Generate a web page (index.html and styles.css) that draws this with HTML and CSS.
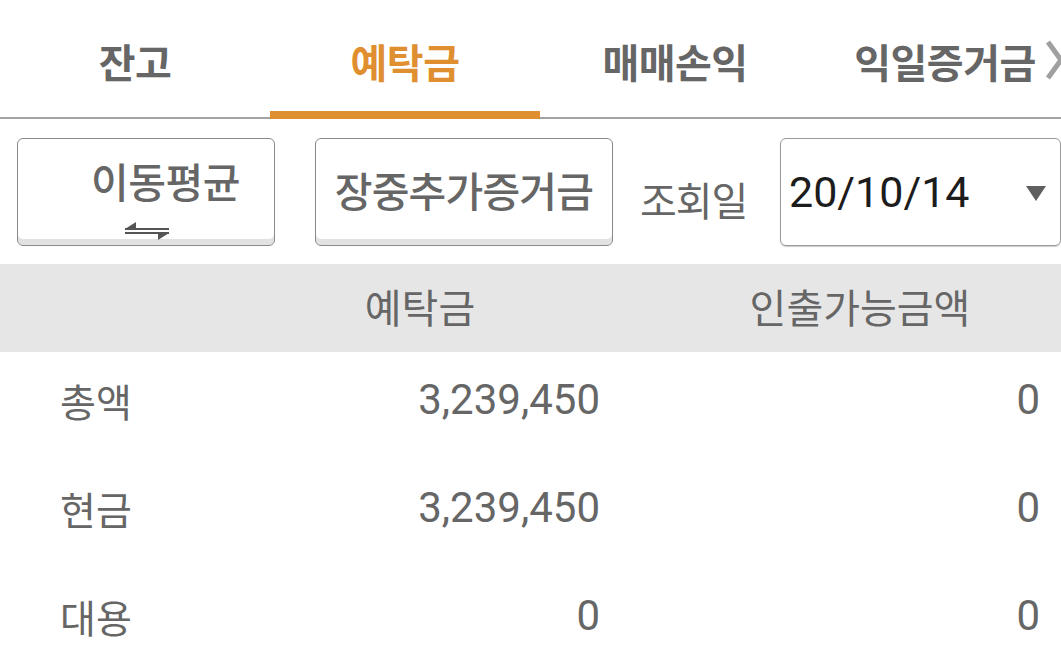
FILE: index.html
```html
<!DOCTYPE html>
<html lang="ko">
<head>
<meta charset="utf-8">
<link rel="stylesheet" href="styles.css">
</head>
<body>
<div class="page">
  <nav class="tabs">
    <div class="tab">잔고</div>
    <div class="tab active">예탁금</div>
    <div class="tab">매매손익</div>
    <div class="tab">익일증거금</div>
    <svg class="chev" width="18" height="42" viewBox="0 0 18 42"><polyline points="3,3 16,21 3,39" fill="none" stroke="#a0a0a0" stroke-width="5"/></svg>
  </nav>
  <div class="controls">
    <button class="btn btn-avg">
      <span class="btn-label">이동평균</span>
      <svg class="swap" width="48" height="20" viewBox="0 0 48 20"><path d="M2 8 H46" stroke="#555" stroke-width="2"/><path d="M2 8 L13 1 L13 8 Z" fill="#555"/><path d="M2 12 H46" stroke="#555" stroke-width="2"/><path d="M46 12 L35 19 L35 12 Z" fill="#555"/></svg>
    </button>
    <button class="btn btn-margin"><span class="btn-label">장중추가증거금</span></button>
    <span class="date-label">조회일</span>
    <div class="date-select">
      <span class="date-value">20/10/14</span>
      <span class="caret"></span>
    </div>
  </div>
  <div class="table">
    <div class="row head">
      <div class="cell label"></div>
      <div class="cell c2">예탁금</div>
      <div class="cell c3">인출가능금액</div>
    </div>
    <div class="row">
      <div class="cell label">총액</div>
      <div class="cell c2 num">3,239,450</div>
      <div class="cell c3 num">0</div>
    </div>
    <div class="row">
      <div class="cell label">현금</div>
      <div class="cell c2 num">3,239,450</div>
      <div class="cell c3 num">0</div>
    </div>
    <div class="row">
      <div class="cell label">대용</div>
      <div class="cell c2 num">0</div>
      <div class="cell c3 num">0</div>
    </div>
  </div>
</div>
</body>
</html>
```
FILE: styles.css
```css
html, body {
  margin: 0;
  padding: 0;
  background: #fff;
}
body {
  width: 1061px;
  height: 647px;
  overflow: hidden;
  font-family: "Noto Sans CJK KR", "Noto Sans", sans-serif;
  color: #666;
}
.page {
  width: 1061px;
}
.tabs {
  position: relative;
  display: flex;
  align-items: flex-start;
  height: 117px;
  border-bottom: 2px solid #a3a3a3;
}
.tab {
  flex: 0 0 270px;
  height: 117px;
  box-sizing: border-box;
  padding-top: 36px;
  text-align: center;
  font-size: 40px;
  font-weight: 700;
  line-height: 50px;
  color: #666;
  letter-spacing: -0.5px;
  white-space: nowrap;
}
.tab.active {
  color: #e08f30;
  height: 119px;
  border-bottom: 8px solid #e08f30;
}
.chev {
  position: absolute;
  left: 1045px;
  top: 39px;
}
.controls {
  display: flex;
  align-items: center;
  height: 108px;
  margin-top: 19px;
  padding-left: 17px;
}
.controls > * {
  flex: none;
}
.btn {
  position: relative;
  box-sizing: border-box;
  height: 108px;
  padding: 0;
  border: 1.5px solid #8a8a8a;
  border-radius: 6px;
  background: #fff;
  box-shadow: inset 0 -6px 0 #e2e2e2;
  font-family: "Noto Sans CJK KR", sans-serif;
  font-size: 41px;
  font-weight: 500;
  color: #666;
  cursor: pointer;
  white-space: nowrap;
}
.btn-avg {
  width: 258px;
}
.btn-avg .btn-label {
  position: absolute;
  left: 73px;
  top: 14px;
  line-height: 54px;
  letter-spacing: -0.5px;
}
.btn-avg .swap {
  position: absolute;
  left: 105px;
  top: 82px;
}
.btn-margin {
  width: 298px;
  margin-left: 40px;
  letter-spacing: -0.8px;
}
.btn-margin .btn-label {
  display: block;
  line-height: 54px;
  margin-top: -6px;
}
.date-label {
  margin-left: 27px;
  font-size: 40px;
  color: #666;
  line-height: 54px;
  margin-top: 14px;
  white-space: nowrap;
  letter-spacing: -1px;
}
.date-select {
  position: relative;
  box-sizing: border-box;
  width: 281px;
  height: 108px;
  margin-left: auto;
  margin-right: 0;
  border: 1px solid #9a9a9a;
  border-radius: 6px;
  box-shadow: 0 1px 1px #ccc;
  display: flex;
  align-items: center;
}
.date-value {
  font-family: Roboto, "Liberation Sans", sans-serif;
  font-size: 43px;
  color: #1c1c1c;
  padding-left: 8px;
}
.caret {
  position: absolute;
  left: 245px;
  top: 47px;
  width: 0;
  height: 0;
  border-left: 10px solid transparent;
  border-right: 10px solid transparent;
  border-top: 15px solid #606060;
}
.table {
  margin-top: 18px;
}
.row {
  display: grid;
  grid-template-columns: 240px 360px 440px;
  height: 108px;
  align-items: center;
}
.row.head {
  height: 88px;
  background: #e6e6e6;
}
.cell {
  font-size: 39px;
  color: #666;
  line-height: 54px;
}
.head .cell {
  font-size: 40px;
  text-align: center;
  margin-top: -4px;
}
.head .c3 {
  padding-left: 80px;
}
.label {
  padding-left: 60px;
}
.num {
  text-align: right;
  font-family: Roboto, "Liberation Sans", sans-serif;
  font-size: 42px;
  color: #666;
}
.row:not(.head) .cell {
  margin-top: -12px;
}
```
